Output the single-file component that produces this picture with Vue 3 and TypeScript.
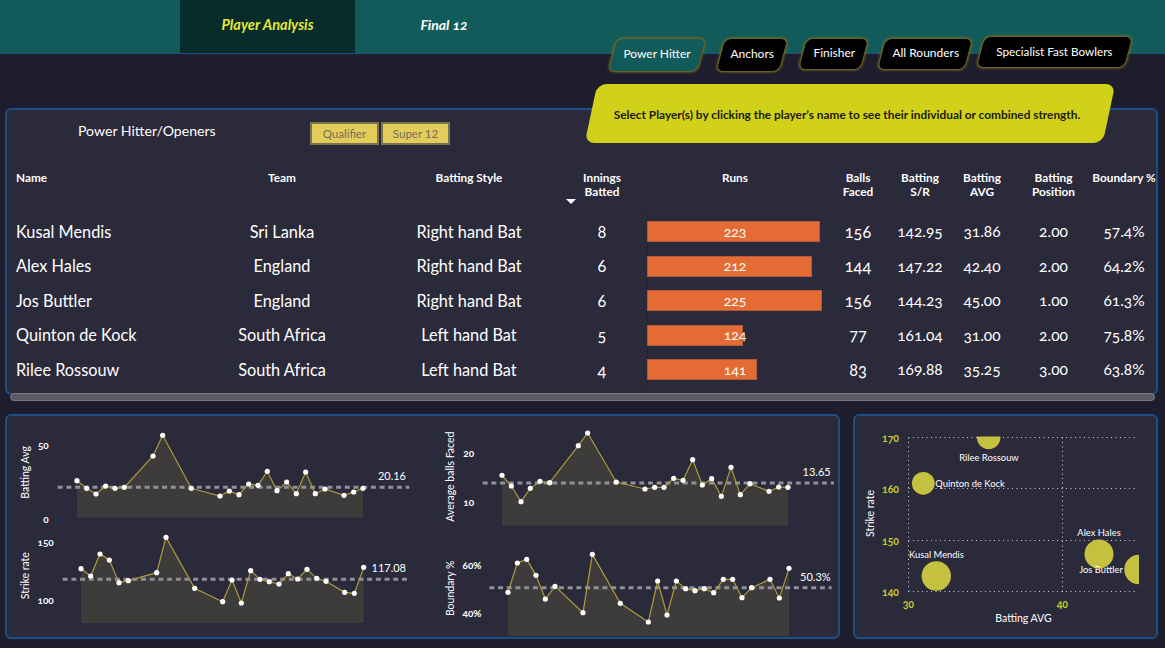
<script setup lang="ts">
// Player analysis dashboard
type Pt = [number, number];

interface Player {
  name: string;
  team: string;
  style: string;
  innings: number;
  runs: number;
  balls: number;
  sr: string;
  avg: string;
  pos: string;
  boundary: string;
}

interface Trend {
  origin: Pt; // crop origin of the 3x measurements
  pts: Pt[];
  bottom: number;
  line: [number, number, number];
  value: string;
  valuePos: Pt;
  ticks: { t: string; x: number; y: number }[];
  title: string;
  titlePos: Pt;
}

const players: Player[] = [
  { name: "Kusal Mendis", team: "Sri Lanka", style: "Right hand Bat", innings: 8, runs: 223, balls: 156, sr: "142.95", avg: "31.86", pos: "2.00", boundary: "57.4%" },
  { name: "Alex Hales", team: "England", style: "Right hand Bat", innings: 6, runs: 212, balls: 144, sr: "147.22", avg: "42.40", pos: "2.00", boundary: "64.2%" },
  { name: "Jos Buttler", team: "England", style: "Right hand Bat", innings: 6, runs: 225, balls: 156, sr: "144.23", avg: "45.00", pos: "1.00", boundary: "61.3%" },
  { name: "Quinton de Kock", team: "South Africa", style: "Left hand Bat", innings: 5, runs: 124, balls: 77, sr: "161.04", avg: "31.00", pos: "2.00", boundary: "75.8%" },
  { name: "Rilee Rossouw", team: "South Africa", style: "Left hand Bat", innings: 4, runs: 141, balls: 83, sr: "169.88", avg: "35.25", pos: "3.00", boundary: "63.8%" },
];

const barWidth = (runs: number) => `${(runs / 225) * 175}px`;

const tabs = [
  { label: "Power Hitter", cls: "t-power" },
  { label: "Anchors", cls: "t-anchors" },
  { label: "Finisher", cls: "t-finisher" },
  { label: "All Rounders", cls: "t-all" },
  { label: "Specialist Fast Bowlers", cls: "t-fast" },
];

const trends: Trend[] = [
  {
    origin: [0, 410],
    pts: [[231,212],[260,235],[288,252],[317,228],[345,235],[373,232],[459,138],[488,76],[574,235],[660,258],[688,243],[717,254],[746,222],[774,226],[802,184],[831,242],[860,216],[889,251],[917,186],[946,251],[975,237],[1032,256],[1061,246],[1089,235]],
    bottom: 323,
    line: [173, 1228, 232],
    value: "20.16",
    valuePos: [1218, 198],
    ticks: [{ t: "50", x: 130, y: 105 }, { t: "0", x: 138, y: 327 }],
    title: "Batting Avg",
    titlePos: [75, 187],
  },
  {
    origin: [0, 410],
    pts: [[243,476],[272,498],[300,432],[328,450],[357,518],[385,512],[470,488],[498,382],[584,535],[668,575],[696,510],[724,579],[752,482],[780,508],[808,515],[837,522],[865,491],[893,507],[921,478],[950,505],[978,514],[1034,547],[1063,550],[1091,472]],
    bottom: 639,
    line: [188, 1232, 508],
    value: "117.08",
    valuePos: [1218, 474],
    ticks: [{ t: "150", x: 137, y: 397 }, { t: "100", x: 137, y: 570 }],
    title: "Strike rate",
    titlePos: [75, 497],
  },
  {
    origin: [430, 410],
    pts: [[216,196],[244,228],[273,275],[301,235],[330,214],[359,218],[445,107],[473,69],[559,216],[645,237],[674,232],[702,232],[731,205],[759,211],[788,149],[817,225],[845,206],[874,259],[903,172],[931,254],[960,221],[1017,244],[1046,231],[1074,232]],
    bottom: 347,
    line: [158, 1212, 219],
    value: "13.65",
    valuePos: [1202, 186],
    ticks: [{ t: "20", x: 116, y: 129 }, { t: "10", x: 116, y: 276 }],
    title: "Average balls Faced",
    titlePos: [60, 200],
  },
  {
    origin: [430, 410],
    pts: [[234,547],[262,459],[290,448],[318,496],[346,567],[375,529],[459,608],[487,433],[571,580],[655,636],[683,513],[711,615],[739,513],[767,536],[795,542],[823,536],[851,548],[880,508],[908,508],[936,563],[965,533],[1020,508],[1048,564],[1077,475]],
    bottom: 677,
    line: [178, 1205, 533],
    value: "50.3%",
    valuePos: [1202, 502],
    ticks: [{ t: "60%", x: 126, y: 467 }, { t: "40%", x: 126, y: 610 }],
    title: "Boundary %",
    titlePos: [60, 535],
  },
];

// 3x crop coordinates -> page coordinates
const px = (tr: Trend, x: number) => tr.origin[0] + x / 3;
const py = (tr: Trend, y: number) => tr.origin[1] + y / 3;

const linePoints = (tr: Trend) =>
  tr.pts.map(([x, y]) => `${px(tr, x)},${py(tr, y)}`).join(" ");

const areaPoints = (tr: Trend) => {
  const first = tr.pts[0][0];
  const last = tr.pts[tr.pts.length - 1][0];
  return `${px(tr, first)},${py(tr, tr.bottom)} ${linePoints(tr)} ${px(tr, last)},${py(tr, tr.bottom)}`;
};

// scatter, in page coordinates of the svg
const bubbles = [
  { cx: 936.3, cy: 576, r: 14.7 },
  { cx: 1099, cy: 554, r: 14.5 },
  { cx: 1139, cy: 569.5, r: 14.7 },
  { cx: 923.3, cy: 483.3, r: 11.4 },
  { cx: 988.7, cy: 437.5, r: 11.7 },
];
const bubbleLabels = [
  { t: "Kusal Mendis", x: 936.5, y: 558 },
  { t: "Alex Hales", x: 1099, y: 536 },
  { t: "Jos Buttler", x: 1101, y: 573 },
  { t: "Quinton de Kock", x: 970, y: 487 },
  { t: "Rilee Rossouw", x: 989, y: 461 },
];
const gridY = [437.5, 488.5, 540.5, 591.5];
const gridX = [908.5, 1062.5];
const yTicks = [
  { t: "170", y: 438 },
  { t: "160", y: 489 },
  { t: "150", y: 541 },
  { t: "140", y: 592 },
];
</script>

<template>
  <div class="page">
    <header class="topbar">
      <div class="nav-item active">Player Analysis</div>
      <div class="nav-item">Final 12</div>
    </header>

    <nav class="role-tabs">
      <div v-for="tab in tabs" :key="tab.label" class="role-tab" :class="tab.cls">
        <span>{{ tab.label }}</span>
      </div>
    </nav>

    <div class="hint"><span>Select Player(s) by clicking the player’s name to see their individual or combined strength.</span></div>

    <section class="panel table-panel">
      <div class="toolbar">
        <div class="panel-title">Power Hitter/Openers</div>
        <button class="stage">Qualifier</button>
        <button class="stage">Super 12</button>
      </div>

      <div class="grid head">
        <div class="left">Name</div>
        <div>Team</div>
        <div>Batting Style</div>
        <div class="sorted">Innings<br />Batted<i class="sort-arrow"></i></div>
        <div class="runs-col">Runs</div>
        <div>Balls<br />Faced</div>
        <div>Batting<br />S/R</div>
        <div>Batting<br />AVG</div>
        <div>Batting<br />Position</div>
        <div>Boundary %</div>
      </div>

      <div v-for="p in players" :key="p.name" class="grid row">
        <div class="left name">{{ p.name }}</div>
        <div class="txt">{{ p.team }}</div>
        <div class="txt">{{ p.style }}</div>
        <div class="txt">{{ p.innings }}</div>
        <div class="runs-col">
          <div class="track">
            <div class="fill" :style="{ width: barWidth(p.runs) }"></div>
            <span class="bar-val">{{ p.runs }}</span>
          </div>
        </div>
        <div class="txt">{{ p.balls }}</div>
        <div class="num">{{ p.sr }}</div>
        <div class="num">{{ p.avg }}</div>
        <div class="num">{{ p.pos }}</div>
        <div class="num">{{ p.boundary }}</div>
      </div>

      <div class="scrollbar"></div>
    </section>

    <div class="bottom">
      <section class="panel trends">
        <svg width="835" height="225" viewBox="5 414 835 225">
          <g v-for="tr in trends" :key="tr.title">
            <polygon :points="areaPoints(tr)" fill="#3e3b3b" />
            <line
              :x1="px(tr, tr.line[0])"
              :x2="px(tr, tr.line[1])"
              :y1="py(tr, tr.line[2])"
              :y2="py(tr, tr.line[2])"
              stroke="#918f97"
              stroke-width="3"
              stroke-dasharray="5 3.7"
            />
            <polyline :points="linePoints(tr)" fill="none" stroke="#ad9a3c" stroke-width="1.2" />
            <circle
              v-for="(pt, i) in tr.pts"
              :key="i"
              :cx="px(tr, pt[0])"
              :cy="py(tr, pt[1])"
              r="2.6"
              fill="#fff"
            />
            <text
              class="val"
              text-anchor="end"
              :x="px(tr, tr.valuePos[0])"
              :y="py(tr, tr.valuePos[1]) + 4"
            >{{ tr.value }}</text>
            <text
              v-for="tk in tr.ticks"
              :key="tk.t"
              class="tick"
              text-anchor="middle"
              :x="px(tr, tk.x)"
              :y="py(tr, tk.y) + 3.5"
            >{{ tk.t }}</text>
            <text
              class="axis"
              text-anchor="middle"
              :transform="`translate(${px(tr, tr.titlePos[0]) + 3.5} ${py(tr, tr.titlePos[1])}) rotate(-90)`"
            >{{ tr.title }}</text>
          </g>
        </svg>
      </section>

      <section class="panel scatter">
        <svg width="305" height="225" viewBox="853 414 305 225">
          <defs>
            <clipPath id="plot-clip">
              <rect x="900" y="436.5" width="239" height="170" />
            </clipPath>
          </defs>
          <line
            v-for="y in gridY"
            :key="'y' + y"
            x1="908.5"
            x2="1136"
            :y1="y"
            :y2="y"
            class="dots"
          />
          <line
            v-for="x in gridX"
            :key="'x' + x"
            :x1="x"
            :x2="x"
            y1="437.5"
            y2="591.5"
            class="dots"
          />
          <g clip-path="url(#plot-clip)">
            <circle v-for="(b, i) in bubbles" :key="i" :cx="b.cx" :cy="b.cy" :r="b.r" fill="#c4c140" />
          </g>
          <text
            v-for="l in bubbleLabels"
            :key="l.t"
            class="bubble-label"
            text-anchor="middle"
            :x="l.x"
            :y="l.y"
          >{{ l.t }}</text>
          <text v-for="t in yTicks" :key="t.t" class="ytick" x="899" text-anchor="end" :y="t.y + 3.5">{{ t.t }}</text>
          <text class="ytick" x="908.3" y="608" text-anchor="middle">30</text>
          <text class="ytick" x="1062.3" y="608" text-anchor="middle">40</text>
          <text class="axis" x="1023.5" y="621.5" text-anchor="middle">Batting AVG</text>
          <text class="axis" text-anchor="middle" transform="translate(874 513.5) rotate(-90)">Strike rate</text>
        </svg>
      </section>
    </div>
  </div>
</template>

<style>
html,
body {
  margin: 0;
  background: #1e1d2e;
}
</style>

<style scoped>
.page {
  position: relative;
  width: 1165px;
  height: 648px;
  overflow: hidden;
  background: #1e1d2e;
  color: #fff;
  font-family: Lato, "Open Sans", sans-serif;
  font-variant-numeric: oldstyle-nums;
  font-feature-settings: "onum" 1;
}

/* ヘッダー */
.topbar {
  display: flex;
  height: 53px;
  padding-left: 180px;
  background: #115b5a;
  border-bottom: 1px solid #1d4f7c;
}

.nav-item {
  width: 178px;
  line-height: 50px;
  text-align: center;
  font-size: 14px;
  font-weight: 700;
  font-style: italic;
}

.nav-item.active {
  width: 175px;
  background: #082b2c;
  color: #e4e832;
  font-size: 14.6px;
}

/* ロール切替タブ */
.role-tabs {
  position: absolute;
  top: 36px;
  left: 612px;
  display: flex;
  align-items: flex-start;
  z-index: 2;
}

.role-tab {
  height: 34px;
  margin-top: 2px;
  padding-bottom: 3px;
  display: flex;
  align-items: center;
  justify-content: center;
  box-sizing: border-box;
  background: #000;
  border: 1px solid #6d5f1e;
  border-radius: 7px;
  box-shadow: 0 0 3px #8a7a22;
  font-size: 12px;
  transform: skewX(-15deg);
}

.role-tab span {
  display: block;
  white-space: nowrap;
  transform: skewX(15deg);
}

.t-power {
  width: 90px;
  margin-right: 18px;
  background: #115b5a;
}

.t-anchors {
  width: 64px;
  margin-right: 18px;
}

.t-finisher {
  width: 63px;
  height: 32px;
  margin-right: 16px;
}

.t-all {
  width: 88px;
  height: 32px;
  margin-right: 11px;
}

.t-fast {
  width: 149px;
  height: 32px;
  margin-top: 0;
  font-size: 11.7px;
}

.hint {
  position: absolute;
  top: 84px;
  left: 591px;
  width: 518px;
  height: 59px;
  padding-top: 2px;
  box-sizing: border-box;
  display: flex;
  align-items: center;
  justify-content: center;
  background: #d2d11a;
  border-radius: 9px;
  color: #1b1b10;
  font-size: 11.85px;
  font-weight: 700;
  white-space: nowrap;
  transform: skewX(-12deg);
  z-index: 2;
}

.hint span {
  padding-right: 6px;
  transform: skewX(12deg);
}

/* パネル共通 */
.panel {
  box-sizing: border-box;
  background: #2b2a3b;
  border: 2px solid #1c4f87;
  border-radius: 6px;
}

.table-panel {
  position: relative;
  width: 1153px;
  height: 287px;
  margin: 54px 0 0 5px;
  padding-left: 9px;
}

.toolbar {
  display: flex;
  align-items: flex-start;
  gap: 2px;
  height: 61px;
  padding: 12px 0 0 62px;
  box-sizing: border-box;
}

.panel-title {
  width: 230px;
  font-size: 14.1px;
}

.stage {
  width: 69px;
  height: 23px;
  padding: 0;
  box-sizing: border-box;
  background: #e4cc5a;
  border: 2px solid #7a7352;
  color: #6f6e5c;
  font-family: inherit;
  font-size: 11.5px;
}

/* テーブル */
.grid {
  display: grid;
  grid-template-columns: 179px 174px 200px 66px 188px 70px 54px 70px 73px 68px;
  text-align: center;
}

.grid > div {
  white-space: nowrap;
}

.left {
  text-align: left;
}

.head {
  height: 43px;
  font-size: 11.8px;
  font-weight: 700;
  line-height: 14px;
}

.sorted {
  position: relative;
}

.sort-arrow {
  position: absolute;
  left: -3px;
  top: 28px;
  border-left: 5px solid transparent;
  border-right: 5px solid transparent;
  border-top: 5px solid #fff;
}

.runs-col {
  padding-left: 12px;
}

.row {
  height: 34.5px;
  align-items: center;
  font-size: 16.3px;
}

.row .name {
  font-size: 16.3px;
}

.num {
  font-size: 15.5px;
}

.track {
  position: relative;
  width: 175px;
  height: 34.5px;
  display: flex;
  align-items: center;
  justify-content: center;
  box-sizing: border-box;
  border-left: 1px solid #252434;
}

.fill {
  position: absolute;
  left: -1px;
  top: 7px;
  height: 21px;
  box-sizing: border-box;
  background: #e56b35;
  border: 1px solid #b25a3a;
}

.bar-val {
  position: relative;
  font-size: 14px;
}

.scrollbar {
  position: absolute;
  left: 3px;
  right: 1px;
  bottom: -8px;
  height: 8px;
  box-sizing: border-box;
  background: #5a5a66;
  border: 1px solid #777986;
  border-radius: 4px;
}

/* 下段チャート */
.bottom {
  display: grid;
  grid-template-columns: 835px 305px;
  gap: 13px;
  margin: 19px 0 0 5px;
}

.trends,
.scatter {
  height: 225px;
  overflow: hidden;
}

.trends svg,
.scatter svg {
  display: block;
  margin: -2px;
}

text {
  font-family: Lato, "Open Sans", sans-serif;
  font-feature-settings: "onum" 1;
  fill: #fff;
}

.val {
  font-size: 11px;
  font-feature-settings: "lnum" 1;
}

.tick {
  font-size: 10px;
  font-weight: 700;
}

.axis {
  font-size: 10.5px;
}

.dots {
  stroke: #d0d0d6;
  stroke-width: 1;
  stroke-dasharray: 1 3.5;
}

.bubble-label {
  font-size: 9.4px;
}

.ytick {
  font-size: 10.5px;
  font-weight: 700;
  fill: #c8c830;
}
</style>
